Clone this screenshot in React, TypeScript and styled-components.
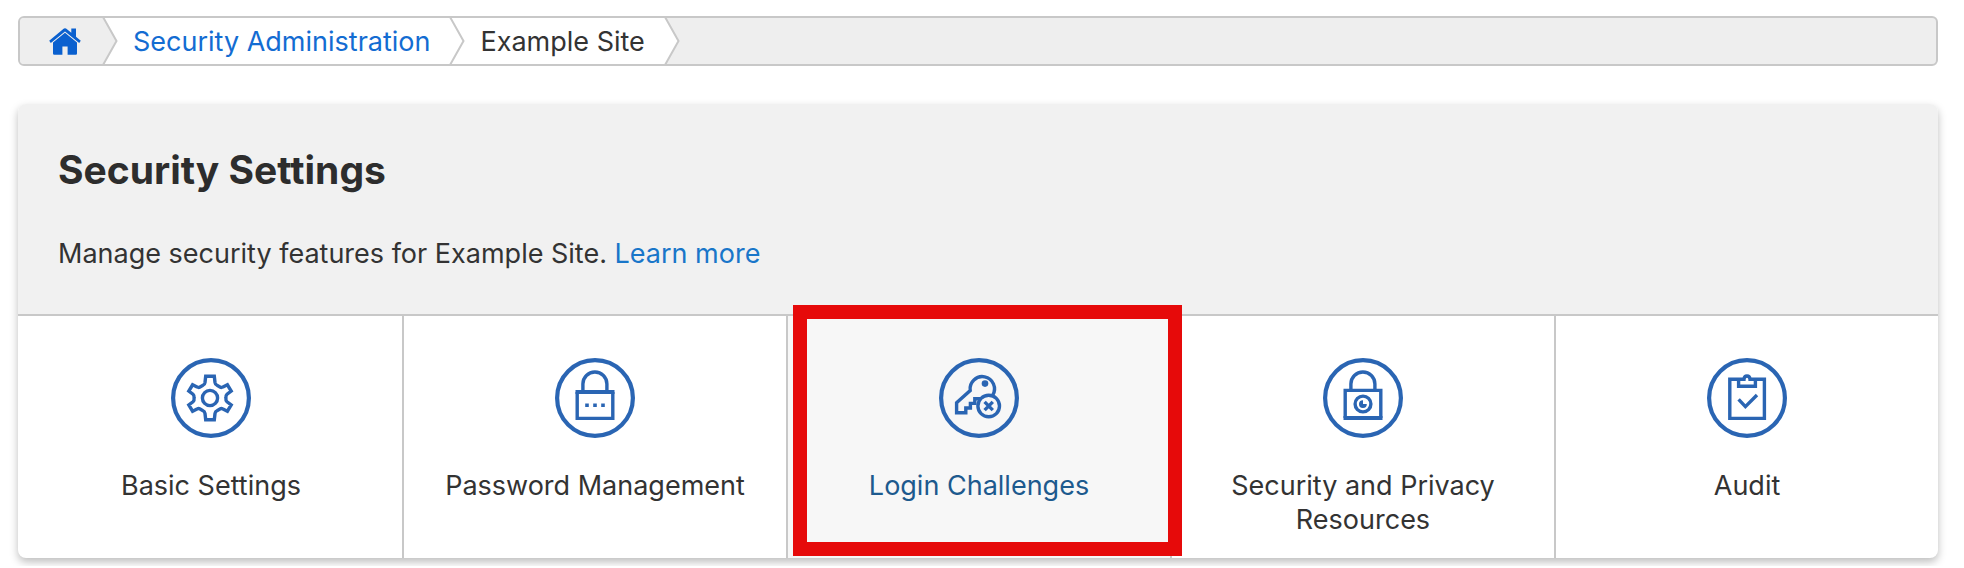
import React from 'react';
import styled, { createGlobalStyle, css } from 'styled-components';

const GlobalStyle = createGlobalStyle`
  *, *::before, *::after { box-sizing: border-box; }
  body {
    margin: 0;
    background: #fff;
    color: #333;
    font-family: Inter, "Liberation Sans", sans-serif;
    font-size: 27px;
    line-height: 34px;
  }
`;

const Page = styled.div`
  display: flex;
  flex-direction: column;
  gap: 38px;
  padding: 16px 26px 8px 18px;
`;

const Crumbs = styled.ol`
  display: flex;
  align-items: stretch;
  height: 50px;
  margin: 0;
  padding: 0;
  list-style: none;
  background: #eee;
  border: 2px solid #c8c8c8;
  border-radius: 6px;
  overflow: hidden;
`;

const Crumb = styled.li<{ $home?: boolean }>`
  display: flex;
  align-items: center;
  padding: ${p => (p.$home ? '0 21px 0 29px' : '2px 19px 0 15px')};
  background: ${p => (p.$home ? '#eee' : '#fff')};
`;

const Divider = styled.li`
  display: flex;
  svg { display: block; }
`;

const CrumbLink = styled.a`
  display: flex;
  color: #136cd2;
  text-decoration: none;
`;

const Card = styled.section`
  background: #fff;
  border-radius: 8px;
  box-shadow: 0 4px 8px rgba(0, 0, 0, 0.26);
`;

const CardHeader = styled.header`
  display: flex;
  flex-direction: column;
  gap: 43px;
  height: 212px;
  padding: 42px 40px 0;
  background: #f1f1f1;
  border-bottom: 2px solid #c8c8c8;
  border-radius: 8px 8px 0 0;
`;

const Title = styled.h1`
  margin: 0;
  font-size: 39px;
  line-height: 48px;
  font-weight: 700;
  color: #2d2d2d;
`;

const Intro = styled.p`
  margin: 0;
`;

const TextLink = styled.a`
  color: #1976c9;
  text-decoration: none;
`;

const Tiles = styled.nav`
  display: grid;
  grid-template-columns: repeat(5, 1fr);
`;

const Tile = styled.a<{ $active?: boolean }>`
  position: relative;
  display: flex;
  flex-direction: column;
  align-items: center;
  gap: 31px;
  min-height: 242px;
  padding: 42px 24px 20px;
  border-left: 2px solid #c8c8c8;
  color: #333;
  text-align: center;
  text-decoration: none;

  &:first-child { border-left-color: transparent; }

  ${p => p.$active && css`
    z-index: 1;
    background: #f7f7f7;
    color: #1d5a8e;
  `}
`;

const Highlight = styled.span`
  position: absolute;
  inset: -11px -12px 2px 5px;
  border: 14px solid #e60a0a;
  pointer-events: none;
`;

const BLUE = '#2a65b3';

function Chevron({ left, right }: { left: string; right: string }) {
  return (
    <svg width="16" height="46" viewBox="0 0 16 46" aria-hidden="true">
      <rect width="16" height="46" fill={right} />
      <path d="M0 0H1L15 23L1 46H0Z" fill={left} />
      <path d="M1 -1L14.5 23L1 47" fill="none" stroke="#c8c8c8" strokeWidth="2" />
    </svg>
  );
}

function HomeIcon() {
  return (
    <svg width="32" height="27" viewBox="0 0 32 27" fill="#0a60cf" aria-hidden="true">
      <path d="M16 .3Q17 .3 18 1.2L22.3 4.8V.6H27V8.8L31.8 12.8L30.2 14.9L16 3.6L1.8 14.9L.2 12.8L14 1.2Q15 .3 16 .3Z" />
      <path d="M16 4.8L28 14.4V25.5Q28 26.7 26.8 26.7H18.6V18.5H13.4V26.7H5.2Q4 26.7 4 25.5V14.4Z" />
    </svg>
  );
}

function RoundIcon({ children }: { children: React.ReactNode }) {
  return (
    <svg width="80" height="80" viewBox="0 0 80 80" fill="none" stroke={BLUE} strokeWidth="3.4" aria-hidden="true">
      <circle cx="40" cy="40" r="37.9" strokeWidth="4.2" />
      {children}
    </svg>
  );
}

const gear = (
  <>
    <path d="M34.7 18.2H43.3L44 24.5Q44.3 26.6 46 27.3L49.4 29.2Q50.5 29.8 52 28.9L56.4 26.8L60.2 33L56 36.2Q54.6 37.4 54.9 40Q54.6 42.6 56 43.8L60.2 47L56.4 53.2L52 51.1Q50.5 50.2 49.4 50.8L46 52.7Q44.3 53.4 44 55.5L43.3 61.8H34.7L34 55.5Q33.7 53.4 32 52.7L28.6 50.8Q27.5 50.2 26 51.1L21.6 53.2L17.8 47L22 43.8Q23.4 42.6 23.1 40Q23.4 37.4 22 36.2L17.8 33L21.6 26.8L26 28.9Q27.5 29.8 28.6 29.2L32 27.3Q33.7 26.6 34 24.5Z" />
    <circle cx="39" cy="40" r="7.6" />
  </>
);

const lockDots = (
  <>
    <path d="M27.9 33V26A12 12 0 0 1 51.9 26V33" />
    <path d="M22.2 34V60.4H57.8V34" />
    <path d="M20.5 34H59.5" strokeWidth="4.2" />
    <path d="M30.2 47.2H33.8M38.2 47.2H41.8M46.2 47.2H49.8" strokeWidth="3.6" />
  </>
);

const keyDenied = (
  <>
    <path d="M53.8 37A12.2 12.2 0 1 0 31.2 32.5L17.6 44.8V54.8H26.8V50H31.4V45.4H35.8V40.8H41" />
    <circle cx="46" cy="25.6" r="3.3" fill={BLUE} stroke="none" />
    <circle cx="49.7" cy="48" r="10.8" fill="#f7f7f7" />
    <path d="M45.6 43.9L53.8 52.1M53.8 43.9L45.6 52.1" />
  </>
);

const lockEye = (
  <>
    <path d="M27.9 32V26A12 12 0 0 1 51.9 26V32" />
    <path d="M22.2 60V32.4H57.8V60" />
    <path d="M20.5 60H59.5" strokeWidth="4.2" />
    <circle cx="40" cy="46" r="7.9" />
    <path d="M40 42.2V46H43.8A3.9 3.9 0 1 1 40 42.2Z" fill={BLUE} stroke="none" />
  </>
);

const clipboard = (
  <>
    <path d="M22.8 21.2H37Q37.2 18 40 18Q42.8 18 43 21.2H57.4V60.4H22.8Z" />
    <path d="M31.6 21.2V28.2H48.4V21.2" />
    <path d="M31.6 41.4L38.4 48.6L50 37" />
  </>
);

const tiles = [
  { label: 'Basic Settings', art: gear },
  { label: 'Password Management', art: lockDots },
  { label: 'Login Challenges', art: keyDenied, active: true },
  { label: 'Security and Privacy Resources', art: lockEye },
  { label: 'Audit', art: clipboard },
];

export default function App() {
  return (
    <>
      <GlobalStyle />
      <Page>
        <nav aria-label="Breadcrumb">
          <Crumbs>
            <Crumb $home>
              <CrumbLink href="#home" aria-label="Home"><HomeIcon /></CrumbLink>
            </Crumb>
            <Divider aria-hidden="true"><Chevron left="#eee" right="#fff" /></Divider>
            <Crumb>
              <CrumbLink href="#security">Security Administration</CrumbLink>
            </Crumb>
            <Divider aria-hidden="true"><Chevron left="#fff" right="#fff" /></Divider>
            <Crumb aria-current="page">Example Site</Crumb>
            <Divider aria-hidden="true"><Chevron left="#fff" right="#eee" /></Divider>
          </Crumbs>
        </nav>
        <Card>
          <CardHeader>
            <Title>Security Settings</Title>
            <Intro>
              Manage security features for Example Site. <TextLink href="#learn">Learn more</TextLink>
            </Intro>
          </CardHeader>
          <Tiles aria-label="Security settings">
            {tiles.map(t => (
              <Tile key={t.label} href="#tile" $active={t.active}>
                <RoundIcon>{t.art}</RoundIcon>
                <span>{t.label}</span>
                {t.active && <Highlight />}
              </Tile>
            ))}
          </Tiles>
        </Card>
      </Page>
    </>
  );
}
